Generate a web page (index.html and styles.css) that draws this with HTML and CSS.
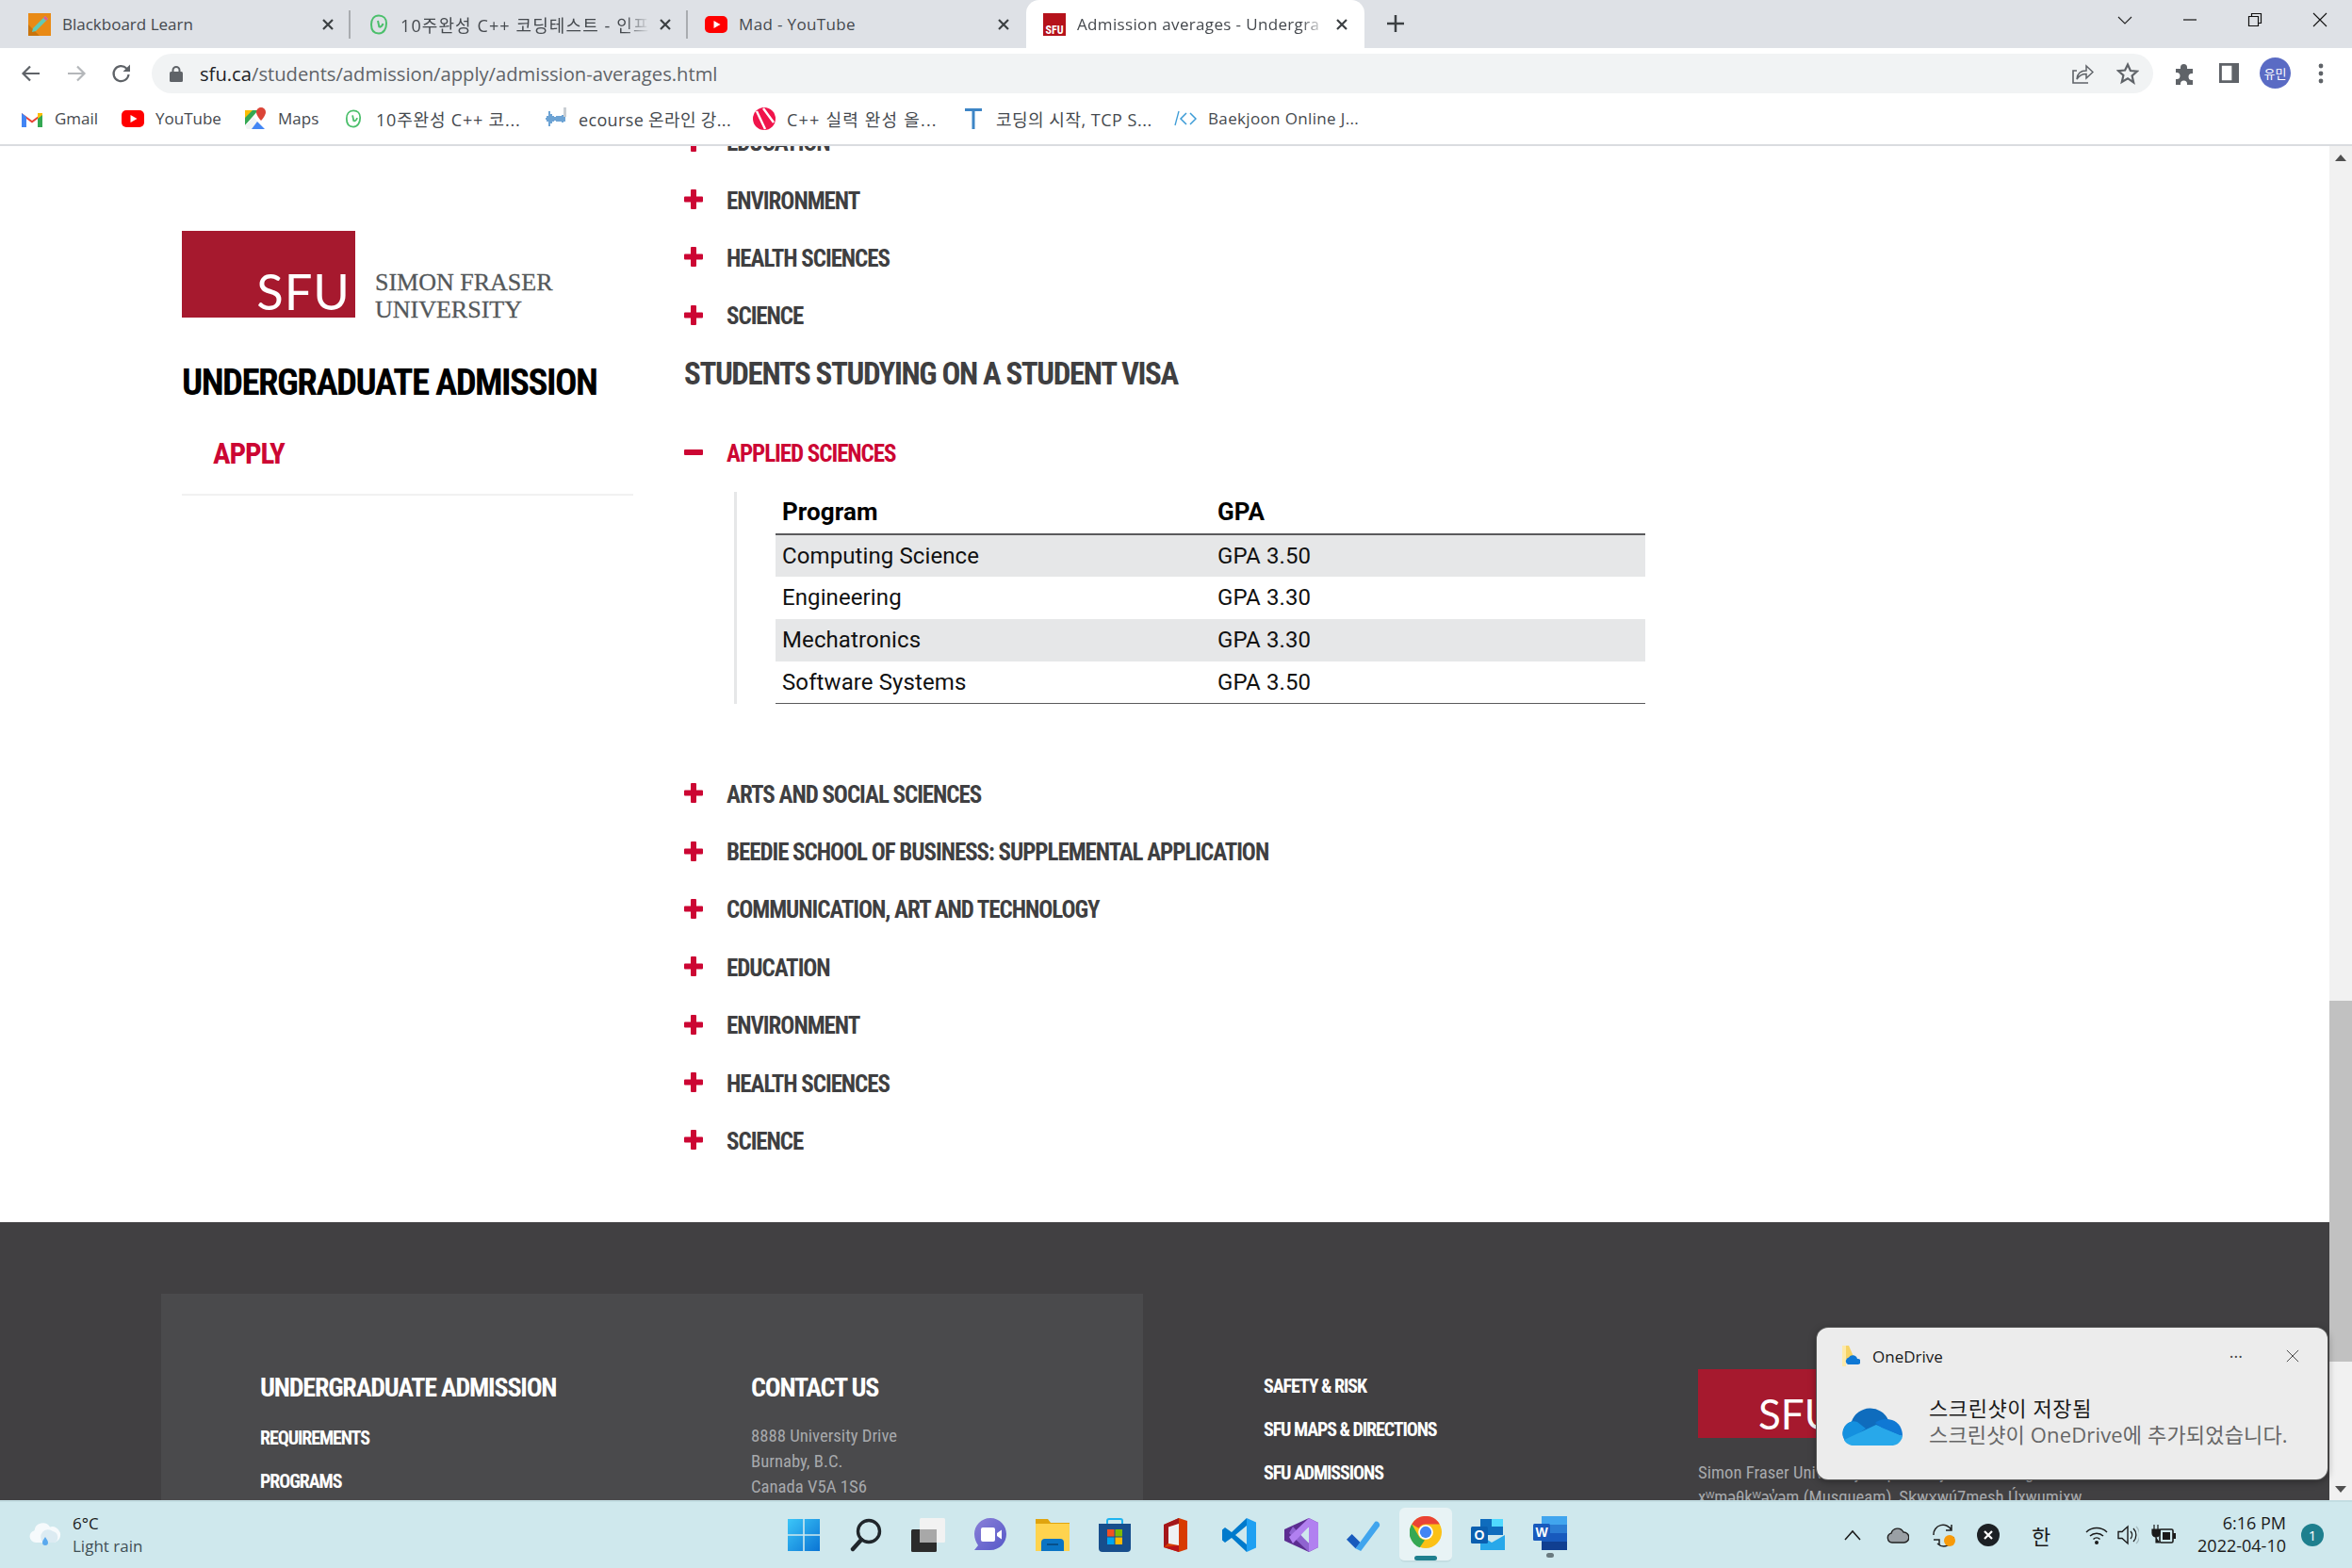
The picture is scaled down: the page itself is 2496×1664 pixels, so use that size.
FILE: index.html
```html
<!DOCTYPE html>
<html lang="en">
<head>
  <meta charset="UTF-8">
  <title>Admission averages - Undergraduate Admission</title>
  <link rel="stylesheet" href="styles.css">
</head>
<body>
  <svg class="defs" width="0" height="0">
    <symbol id="yt" viewBox="0 0 24 18"><rect width="24" height="18" rx="5" fill="#f00"/><path d="M9.5 5l7 4-7 4z" fill="#fff"/></symbol>
    <symbol id="inf" viewBox="0 0 20 22"><path d="M10 1.5c4.8 0 8 3.2 8 8.2 0 5.5-2.6 10.8-8 10.8-5 0-8-3.5-8-9.500 0-5.500 3-9.500 8-9.500z" fill="none" stroke="#4bbf6b" stroke-width="2"/><path d="M9 7l1.500 7M10.500 14c2-.5 3.500-2 4-4" fill="none" stroke="#4bbf6b" stroke-width="2"/></symbol>
    <symbol id="x" viewBox="0 0 14 14"><path d="M2 2l10 10M12 2L2 12" stroke="#3c4043" stroke-width="2.200" fill="none"/></symbol>
    <symbol id="plus" viewBox="0 0 20 21"><path d="M7 1a1 1 0 0 1 1-1h4a1 1 0 0 1 1 1v6.500h6a1 1 0 0 1 1 1v4a1 1 0 0 1-1 1h-6V20a1 1 0 0 1-1 1H8a1 1 0 0 1-1-1v-6.500H1a1 1 0 0 1-1-1v-4a1 1 0 0 1 1-1h6z" fill="#cc0633"/></symbol>
  </svg>

  <div class="tabstrip">
    <div class="tab">
      <svg class="favicon" viewBox="0 0 24 24"><rect width="24" height="24" fill="#e98a15"/><path d="M0 24V12l12 12z" fill="#c9740c"/><path d="M18 3l3 3L8 19l-4 1 1-4z" fill="#62c9b6"/><path d="M18 3l3 3-2 2-3-3z" fill="#e85c8a"/></svg>
      <span class="tab-title">Blackboard Learn</span>
      <svg class="tab-close"><use href="#x"/></svg>
    </div>
    <div class="tab tab-second">
      <svg class="favicon favicon-inf"><use href="#inf"/></svg>
      <span class="tab-title tab-fade ko">10주완성 C++ 코딩테스트 - 인프</span>
      <svg class="tab-close"><use href="#x"/></svg>
    </div>
    <div class="tab tab-last">
      <svg class="favicon favicon-yt"><use href="#yt"/></svg>
      <span class="tab-title">Mad - YouTube</span>
      <svg class="tab-close"><use href="#x"/></svg>
    </div>
    <div class="tab tab-active">
      <div class="favicon favicon-sfu"><span>SFU</span></div>
      <span class="tab-title tab-fade">Admission averages - Undergra</span>
      <svg class="tab-close"><use href="#x"/></svg>
    </div>
    <svg class="new-tab" viewBox="0 0 18 18"><path d="M9 0v18M0 9h18" stroke="#3c4043" stroke-width="2.500"/></svg>
    <div class="window-controls">
      <svg class="win-btn" viewBox="0 0 16 16"><path d="M1 5l7 7 7-7" fill="none" stroke="#222" stroke-width="1.100"/></svg>
      <svg class="win-btn" viewBox="0 0 16 16"><path d="M1 8h14" stroke="#111" stroke-width="1.200"/></svg>
      <svg class="win-btn" viewBox="0 0 16 16"><path d="M1.500 4.500h10v10h-10zM4.500 4V1.500h10v10H12" fill="none" stroke="#111" stroke-width="1.200"/></svg>
      <svg class="win-btn" viewBox="0 0 16 16"><path d="M1 1l14 14M15 1L1 15" stroke="#111" stroke-width="1.100"/></svg>
    </div>
  </div>

  <div class="toolbar">
    <svg class="nav-icon" viewBox="0 0 24 24"><path d="M21 12H4M11 4.500L3.500 12l7.500 7.500" fill="none" stroke="#5f6368" stroke-width="2.200"/></svg>
    <svg class="nav-icon" viewBox="0 0 24 24"><path d="M3 12h17M13 4.500l7.500 7.500-7.500 7.500" fill="none" stroke="#b4b7ba" stroke-width="2.200"/></svg>
    <svg class="nav-icon" viewBox="0 0 24 24"><path d="M19.500 13a8 8 0 1 1-2.300-6.500L20 9" fill="none" stroke="#5f6368" stroke-width="2.200"/><path d="M21 2.500V10h-7.500z" fill="#5f6368"/></svg>
    <div class="omnibox">
      <svg class="lock" viewBox="0 0 14 18"><path d="M3.500 8V5.500a3.500 3.500 0 0 1 7 0V8" fill="none" stroke="#5f6368" stroke-width="2"/><rect y="7" width="14" height="11" rx="1.500" fill="#5f6368"/></svg>
      <span class="url"><b>sfu.ca</b>/students/admission/apply/admission-averages.html</span>
      <svg class="omni-icon" viewBox="0 0 24 24"><path d="M18 22H2V9h4" fill="none" stroke="#5f6368" stroke-width="1.600"/><path d="M6 18c.5-6 4.500-9 10-9V4l7 6.500-7 6.500v-4.500c-4 0-7.500 1.500-10 5.500z" fill="none" stroke="#5f6368" stroke-width="1.500"/></svg>
      <svg class="omni-icon" viewBox="0 0 24 24"><path d="M12 2.500l2.900 6.500 7 .7-5.300 4.700 1.600 7L12 17.200l-6.200 3.700 1.600-7-5.300-4.700 7-.7z" fill="none" stroke="#5f6368" stroke-width="2.200"/></svg>
    </div>
    <svg class="tool-puzzle" viewBox="0 0 24 24"><path d="M3 7h5V5.500a3.500 3.500 0 0 1 7 0V7h6v5h-1a3.500 3.500 0 0 0 0 7h1v5h-6v-1a3.500 3.500 0 0 0-7 0v1H3v-6h1a3.500 3.500 0 0 0 0-7H3z" fill="#5f6368"/></svg>
    <svg class="tool-panel" viewBox="0 0 22 22"><path d="M0 0h22v22H0zM3 3v16h11V3z" fill="#5f6368" fill-rule="evenodd"/></svg>
    <div class="avatar"><span>유민</span></div>
    <svg class="tool-dots" viewBox="0 0 6 24"><circle cx="3" cy="4" r="2.400" fill="#5f6368"/><circle cx="3" cy="12" r="2.400" fill="#5f6368"/><circle cx="3" cy="20" r="2.400" fill="#5f6368"/></svg>
  </div>

  <div class="bookmarks">
    <div class="bm bm-gmail">
      <svg class="bm-icon" viewBox="0 0 24 18"><path d="M1 18V3l11 8 11-8v15h-5V9l-6 4.500L6 9v9z" fill="#ea4335"/><path d="M1 18V3l5 4v11z" fill="#4285f4"/><path d="M23 18V3l-5 4v11z" fill="#34a853"/><path d="M18 3v6l5-4V3z" fill="#fbbc04"/></svg>
      <span>Gmail</span>
    </div>
    <div class="bm bm-yt">
      <svg class="bm-icon"><use href="#yt"/></svg>
      <span>YouTube</span>
    </div>
    <div class="bm bm-maps">
      <svg class="bm-icon bm-icon-tall" viewBox="0 0 24 24"><path d="M1 3h14L1 19z" fill="#34a853"/><path d="M1 19L10 10l11 13H3z" fill="#f1f3f4"/><path d="M8 23l6-8 8 8z" fill="#4285f4"/><path d="M1 3h8L1 11z" fill="#fbbc04"/><path d="M18 0a5 5 0 0 1 5 5c0 4-5 9-5 9s-5-5-5-9a5 5 0 0 1 5-5z" fill="#db4437"/></svg>
      <span>Maps</span>
    </div>
    <div class="bm bm-inf">
      <svg class="bm-icon bm-icon-inf"><use href="#inf"/></svg>
      <span class="ko">10주완성 C++ 코...</span>
    </div>
    <div class="bm bm-ecourse">
      <svg class="bm-icon bm-icon-tall" viewBox="0 0 24 24"><path d="M1 12h1M3 9v6M5 4v16M7 7v10M9 9v6M11 10v4M13 9v6M15 9v6M17 9v6M19 8v8M21 9v6" stroke="#3d85c6" stroke-width="1.500"/><path d="M20 0h3v10h-3z" fill="#c9ced3"/></svg>
      <span class="ko">ecourse 온라인 강...</span>
    </div>
    <div class="bm bm-cpp">
      <svg class="bm-icon bm-icon-tall" viewBox="0 0 24 24"><circle cx="12" cy="12" r="12" fill="#f0144b"/><path d="M4 4l9 19M11 1l11 15" stroke="#fff" stroke-width="2.400"/></svg>
      <span class="ko">C++ 실력 완성 올...</span>
    </div>
    <div class="bm bm-t">
      <svg class="bm-icon bm-icon-tall" viewBox="0 0 20 24"><path d="M1 1h18v3h-7.500v19h-3V4H1z" fill="#3d85c6"/></svg>
      <span class="ko">코딩의 시작, TCP S...</span>
    </div>
    <div class="bm bm-boj">
      <svg class="bm-icon" viewBox="0 0 24 18"><path d="M5 1L1 16" stroke="#3c9bd6" stroke-width="1.300"/><path d="M13 3L7 9l6 6M17 3l6 6-6 6" fill="none" stroke="#3c9bd6" stroke-width="1.500"/></svg>
      <span>Baekjoon Online J...</span>
    </div>
  </div>

  <div class="viewport">
    <div class="page">
      <div class="columns">
        <aside class="sidebar">
          <div class="logo">
            <div class="logo-mark"><span>SFU</span></div>
            <div class="logo-name">SIMON FRASER<br>UNIVERSITY</div>
          </div>
          <h1 class="site-title">UNDERGRADUATE ADMISSION</h1>
          <div class="side-nav">APPLY</div>
        </aside>

        <main class="content">
          <div class="acc-row"><svg class="acc-icon"><use href="#plus"/></svg><span>EDUCATION</span></div>
          <div class="acc-row"><svg class="acc-icon"><use href="#plus"/></svg><span>ENVIRONMENT</span></div>
          <div class="acc-row"><svg class="acc-icon"><use href="#plus"/></svg><span>HEALTH SCIENCES</span></div>
          <div class="acc-row"><svg class="acc-icon"><use href="#plus"/></svg><span>SCIENCE</span></div>

          <h2 class="visa-title">STUDENTS STUDYING ON A STUDENT VISA</h2>

          <div class="acc-row acc-open"><div class="acc-minus"></div><span>APPLIED SCIENCES</span></div>
          <div class="acc-body">
            <table class="gpa-table">
              <thead>
                <tr><th>Program</th><th>GPA</th></tr>
              </thead>
              <tbody>
                <tr><td>Computing Science</td><td>GPA 3.50</td></tr>
                <tr><td>Engineering</td><td>GPA 3.30</td></tr>
                <tr><td>Mechatronics</td><td>GPA 3.30</td></tr>
                <tr><td>Software Systems</td><td>GPA 3.50</td></tr>
              </tbody>
            </table>
          </div>

          <div class="acc-row"><svg class="acc-icon"><use href="#plus"/></svg><span>ARTS AND SOCIAL SCIENCES</span></div>
          <div class="acc-row"><svg class="acc-icon"><use href="#plus"/></svg><span>BEEDIE SCHOOL OF BUSINESS: SUPPLEMENTAL APPLICATION</span></div>
          <div class="acc-row"><svg class="acc-icon"><use href="#plus"/></svg><span>COMMUNICATION, ART AND TECHNOLOGY</span></div>
          <div class="acc-row"><svg class="acc-icon"><use href="#plus"/></svg><span>EDUCATION</span></div>
          <div class="acc-row"><svg class="acc-icon"><use href="#plus"/></svg><span>ENVIRONMENT</span></div>
          <div class="acc-row"><svg class="acc-icon"><use href="#plus"/></svg><span>HEALTH SCIENCES</span></div>
          <div class="acc-row"><svg class="acc-icon"><use href="#plus"/></svg><span>SCIENCE</span></div>
        </main>
      </div>

      <footer class="footer">
        <div class="footer-panel">
          <div class="footer-col-a">
            <h3>UNDERGRADUATE ADMISSION</h3>
            <a>REQUIREMENTS</a>
            <a>PROGRAMS</a>
          </div>
          <div class="footer-col-b">
            <h3>CONTACT US</h3>
            <p>8888 University Drive</p>
            <p>Burnaby, B.C.</p>
            <p>Canada V5A 1S6</p>
          </div>
        </div>
        <div class="footer-links">
          <a>SAFETY &amp; RISK</a>
          <a>SFU MAPS &amp; DIRECTIONS</a>
          <a>SFU ADMISSIONS</a>
        </div>
        <div class="footer-brand">
          <div class="footer-mark"><span>SFU</span></div>
          <p>Simon Fraser University respectfully acknowledges the</p>
          <p>xʷməθkʷəy̓əm (Musqueam), Sḵwx̱wú7mesh Úxwumixw</p>
        </div>
      </footer>
    </div>

    <div class="scrollbar">
      <div class="sb-arrow"><div class="sb-up"></div></div>
      <div class="sb-track"><div class="sb-thumb"></div></div>
      <div class="sb-arrow"><div class="sb-down"></div></div>
    </div>

    <div class="toast">
      <div class="toast-head">
        <svg class="toast-app" viewBox="0 0 20 24"><path d="M1 1h7l6 14H1z" fill="#f6d365"/><path d="M1 1h4v22H1z" fill="#fde9a8"/><path d="M7 21a4 4 0 0 1 1-7.500 5 5 0 0 1 9 1.500 3 3 0 0 1 1 6z" fill="#0f78d4"/></svg>
        <span class="toast-name">OneDrive</span>
        <span class="toast-more">···</span>
        <svg class="toast-close" viewBox="0 0 16 16"><path d="M1 1l14 14M15 1L1 15" stroke="#444" stroke-width="1.100"/></svg>
      </div>
      <div class="toast-body">
        <svg class="toast-cloud" viewBox="0 0 66 46"><path d="M14 44A13 13 0 0 1 11 18.500 21 21 0 0 1 50 17a14 14 0 0 1 4 27z" fill="#0f6cbd"/><path d="M11 18.500A13 13 0 0 0 5 40l21-14-9-7a14 14 0 0 0-6-.5z" fill="#1490df"/><path d="M37 22l28 12c-1 6-6 10-11 10H14c-5 0-9-2-11-6z" fill="#28a8ea"/><path d="M36 20c5-4 11-5 18-3 7 2 11 9 11 17L43 25z" fill="#0f78d4"/></svg>
        <div class="toast-text">
          <div class="toast-title">스크린샷이 저장됨</div>
          <div class="toast-sub">스크린샷이 OneDrive에 추가되었습니다.</div>
        </div>
      </div>
    </div>
  </div>

  <div class="taskbar">
    <div class="weather">
      <svg class="weather-icon" viewBox="0 0 36 32"><path d="M8 24a6.500 6.500 0 0 1-1.500-12.800A9 9 0 0 1 23 7.500 8 8 0 0 1 28 24z" fill="#f6fafc"/><path d="M16 24a6 6 0 0 1 10-12 6.500 6.500 0 0 1 2 12z" fill="#dcebf2"/><path d="M18 18c1.500 2.500 3 4 3 6a3 3 0 0 1-6 0c0-2 1.500-3.500 3-6z" fill="#5aa9ee"/></svg>
      <div class="weather-text"><div>6°C</div><div>Light rain</div></div>
    </div>

    <div class="task-icons">
      <svg class="task-icon" viewBox="0 0 36 36"><defs><linearGradient id="w" x1="0" y1="0" x2="1" y2="1"><stop offset="0" stop-color="#3cc6f8"/><stop offset="1" stop-color="#0a74d4"/></linearGradient></defs><path d="M1 1h16.200v16.200H1zM18.800 1H35v16.200H18.800zM1 18.800h16.200V35H1zM18.800 18.800H35V35H18.800z" fill="url(#w)"/></svg>
      <svg class="task-icon" viewBox="0 0 36 36"><circle cx="21" cy="14" r="11.500" fill="none" stroke="#20262b" stroke-width="3.400"/><path d="M13 23L4 33" stroke="#20262b" stroke-width="4.400" stroke-linecap="round"/></svg>
      <svg class="task-icon" viewBox="0 0 36 36"><rect x="0" y="12" width="27" height="24" rx="1.500" fill="#2b2b2b"/><rect x="9" y="0" width="27" height="26" rx="1.500" fill="#f2f2f2"/><rect x="9" y="12" width="18" height="14" fill="#a8a8a8"/></svg>
      <svg class="task-icon" viewBox="0 0 36 36"><defs><linearGradient id="c" x1="0" y1="0" x2="1" y2="1"><stop offset="0" stop-color="#8b80d8"/><stop offset="1" stop-color="#5558c8"/></linearGradient></defs><path d="M18 0c10 0 17 8 17 17s-7 17-17 17H1l4-5C3 26 1 22 1 17 1 8 8 0 18 0z" fill="url(#c)"/><path d="M8 12a2 2 0 0 1 2-2h11a2 2 0 0 1 2 2v11a2 2 0 0 1-2 2H10a2 2 0 0 1-2-2zM25 16l5-3.500v10L25 19z" fill="#fff"/></svg>
      <svg class="task-icon" viewBox="0 0 36 36"><path d="M0 1h13l3 4h20v30H0z" fill="#e0a40e"/><path d="M0 6h36v29H0z" fill="#ffd34e"/><path d="M6 26a4 4 0 0 1 4-4h16a4 4 0 0 1 4 4v9H6z" fill="#0a74c4"/><path d="M12 28h12" stroke="#07508a" stroke-width="2"/></svg>
      <svg class="task-icon" viewBox="0 0 36 36"><path d="M10 8V3a2 2 0 0 1 2-2h12a2 2 0 0 1 2 2v5" fill="none" stroke="#1fb4f0" stroke-width="2"/><path d="M1 6h34v26a4 4 0 0 1-4 4H5a4 4 0 0 1-4-4z" fill="#174e8c"/><path d="M10 12h7.500v7.500H10z" fill="#f25022"/><path d="M18.500 12H26v7.500h-7.500z" fill="#7fba00"/><path d="M10 20.500h7.500V28H10z" fill="#00a4ef"/><path d="M18.500 20.500H26V28h-7.500z" fill="#ffb900"/></svg>
      <svg class="task-icon" viewBox="0 0 36 36"><path d="M4 7l16-7 9 3v30l-9 3-16-5z" fill="#d83b01"/><path d="M4 7l16-7v6L9 9.500v17l-5 4.500z" fill="#a4161a"/><path d="M4 31l16-2v7z" fill="#b8141a"/><path d="M9 9.500L20 6v23L9 27z" fill="#eef1f3"/></svg>
      <svg class="task-icon" viewBox="0 0 36 36"><path d="M26 0L10 15 3 10l-3 2.500v11L3 26l7-5 16 15z" fill="#007acc"/><path d="M26 8L14 18l12 10z" fill="#cfe8ed"/><path d="M26 0l10 4.500v27L26 36z" fill="#1fa0f2"/></svg>
      <svg class="task-icon" viewBox="0 0 36 36"><path d="M26 0l10 5v26l-10 5L0 24V12z" fill="#5c2d91"/><path d="M26 9L15 18l11 9z" fill="#cfe8ed"/><path d="M26 0l10 5v26l-10 5z" fill="#b180f0"/><path d="M9 9l17 18v9L5 16z" fill="#8f63d0"/><path d="M26 0v9L9 27l-4-7z" fill="#b180f0"/></svg>
      <svg class="task-icon" viewBox="0 0 38 36"><path d="M0 23l6-6 10 10-6 6z" fill="#185abd"/><path d="M10 33l22-30a4 4 0 0 1 5 5L16 36z" fill="#41a5ee"/></svg>
      <div class="task-chrome">
        <svg class="chrome-logo" viewBox="0 0 32 32"><circle cx="16" cy="16" r="16" fill="#fbc116"/><path d="M2.100 8A16 16 0 0 1 29.900 8H16a8 8 0 0 0-7 4z" fill="#ea4335"/><path d="M2.100 8L9 20l1 1.500a8 8 0 0 0 5 2.500l-5 7.300A16 16 0 0 1 2.100 8z" fill="#34a853"/><circle cx="16" cy="16" r="7.400" fill="#fff"/><circle cx="16" cy="16" r="5.800" fill="#4285f4"/></svg>
        <div class="chrome-bar"></div>
      </div>
      <svg class="task-icon" viewBox="0 0 36 36"><path d="M10 1h24v17H10z" fill="#0f6cbd"/><path d="M22 1h12v8H22z" fill="#50d9ff"/><path d="M10 18l12 8 14-8v16H10z" fill="#28a8ea"/><rect y="9" width="18" height="18" rx="1.500" fill="#0a5fb0"/><text class="app-letter" x="9" y="23">O</text></svg>
      <div class="task-word">
        <svg class="task-icon" viewBox="0 0 36 36"><path d="M9 0h27v9H9z" fill="#41a5ee"/><path d="M9 9h27v9H9z" fill="#2b7cd3"/><path d="M9 18h27v9H9z" fill="#185abd"/><path d="M9 27h27v9H9z" fill="#103f91"/><rect y="8" width="18" height="18" rx="1.500" fill="#185abd"/><text class="app-letter" x="9" y="22">W</text></svg>
        <div class="word-dot"></div>
      </div>
    </div>

    <div class="tray">
      <svg class="tray-chevron" viewBox="0 0 18 12"><path d="M1 11l8-9 8 9" fill="none" stroke="#1a1a1a" stroke-width="1.500"/></svg>
      <svg class="tray-cloud" viewBox="0 0 24 18"><path d="M6 17a5 5 0 0 1-1-9.800A7 7 0 0 1 18 6a5.500 5.500 0 0 1 .5 11z" fill="#9aa0a5" stroke="#222" stroke-width="1.400"/></svg>
      <svg class="tray-sync" viewBox="0 0 26 26"><path d="M2 13A10 10 0 0 1 21 8M21 2v6h-6M23 15A10 10 0 0 1 6 22M2 18h6v6" fill="none" stroke="#222" stroke-width="1.500"/><circle cx="19" cy="19" r="6" fill="#f79a09"/></svg>
      <svg class="tray-x" viewBox="0 0 24 24"><circle cx="12" cy="12" r="12" fill="#1c2024"/><path d="M8 8l8 8M16 8l-8 8" stroke="#fff" stroke-width="2.200"/></svg>
      <span class="tray-ime">한</span>
      <svg class="tray-wifi" viewBox="0 0 24 20"><path d="M1 7a16 16 0 0 1 22 0M5 11a10 10 0 0 1 14 0M8.500 14.500a5 5 0 0 1 7 0" fill="none" stroke="#1a1a1a" stroke-width="1.500"/><circle cx="12" cy="18" r="2" fill="#1a1a1a"/></svg>
      <svg class="tray-vol" viewBox="0 0 24 22"><path d="M2 7.500h4L12 2v18l-6-5.500H2z" fill="none" stroke="#1a1a1a" stroke-width="1.400"/><path d="M15 7a6 6 0 0 1 0 8M18 4a10 10 0 0 1 0 14" fill="none" stroke="#1a1a1a" stroke-width="1.300"/><path d="M21 2a13 13 0 0 1 0 18" fill="none" stroke="#a7bcc1" stroke-width="1.300"/></svg>
      <svg class="tray-batt" viewBox="0 0 26 22"><path d="M3 0v5M7 0v5M1 5h8v4a4 4 0 0 1-8 0zM5 13v6h4" fill="#1a1a1a" stroke="#1a1a1a" stroke-width="1.200"/><rect x="9" y="5" width="14" height="14" rx="1.500" fill="none" stroke="#1a1a1a" stroke-width="1.600"/><rect x="12" y="8" width="8" height="8" fill="#1a1a1a"/><rect x="23" y="9" width="3" height="6" fill="#1a1a1a"/></svg>
      <div class="clock"><div>6:16 PM</div><div>2022-04-10</div></div>
      <div class="badge">1</div>
    </div>
  </div>
</body>
</html>
```
FILE: styles.css
```css
* {
  box-sizing: border-box;
}
html, body {
  margin: 0;
  height: 100%;
}
body {
  width: 2496px;
  height: 1664px;
  overflow: hidden;
  display: flex;
  flex-direction: column;
  font-family: "Open Sans", "Noto Sans CJK KR", sans-serif;
  background: #fff;
}
.defs {
  position: absolute;
}
.ko {
  font-size: 18px;
  letter-spacing: 0.800px;
}

/* browser tabs */
.tabstrip {
  height: 51px;
  flex: none;
  display: flex;
  align-items: stretch;
  background: #dee1e6;
}
.tab {
  width: 358px;
  padding: 0 17px 0 30px;
  display: flex;
  align-items: center;
  font-size: 17px;
  color: #45494e;
  position: relative;
}
.tab:not(.tab-active):not(.tab-last)::after {
  content: "";
  position: absolute;
  right: 0;
  top: 11px;
  bottom: 10px;
  width: 2px;
  background: #a9acb0;
}
.tab:first-child {
  width: 372px;
}
.tab-second {
  padding-left: 20px;
}
.tab-second .ko {
  letter-spacing: 1.100px;
}
.tab-last {
  padding-left: 18px;
  width: 359px;
  letter-spacing: 0.350px;
}
.tab-active {
  width: 359px;
  padding-left: 18px;
  background: #fff;
  border-radius: 14px 14px 0 0;
  letter-spacing: 0.350px;
}
.favicon {
  width: 24px;
  height: 24px;
  flex: none;
  margin-right: 12px;
}
.favicon-inf {
  width: 20px;
  height: 22px;
  margin-right: 13px;
}
.favicon-yt {
  height: 18px;
  margin-right: 12px;
}
.favicon-sfu {
  background: #b5121b;
  color: #fff;
  font: bold 12px/11px "Roboto Condensed", sans-serif;
  letter-spacing: 0;
  display: flex;
  align-items: flex-end;
  justify-content: center;
  overflow: hidden;
}
.tab-title {
  flex: 1;
  white-space: nowrap;
  overflow: hidden;
}
.tab-fade {
  -webkit-mask-image: linear-gradient(to right, #000 90%, transparent 100%);
  mask-image: linear-gradient(to right, #000 90%, transparent 100%);
}
.tab-close {
  width: 14px;
  height: 14px;
  flex: none;
  margin-left: 10px;
}
.new-tab {
  width: 18px;
  height: 18px;
  margin: 16px 0 0 24px;
}
.window-controls {
  margin-left: auto;
  display: flex;
  gap: 53px;
  align-items: flex-start;
  padding: 13px 26px 0 0;
}
.win-btn {
  width: 16px;
  height: 16px;
}

/* address bar */
.toolbar {
  height: 51px;
  flex: none;
  display: flex;
  align-items: center;
  padding: 2px 0 0 21px;
  background: #fff;
}
.nav-icon {
  width: 24px;
  height: 24px;
  margin-right: 24px;
}
.nav-icon:nth-child(3) {
  margin-right: 20px;
}
.omnibox {
  width: 2124px;
  height: 42px;
  border-radius: 21px;
  background: #f1f3f4;
  display: flex;
  align-items: center;
  padding-left: 19px;
  font-size: 20.200px;
  color: #5f6368;
}
.omnibox b {
  font-weight: 400;
  color: #202124;
}
.lock {
  width: 14px;
  height: 18px;
  margin-right: 18px;
}
.url {
  flex: 1;
}
.omni-icon {
  width: 24px;
  height: 24px;
  margin-right: 24px;
}
.omni-icon:last-child {
  margin-right: 15px;
}
.tool-puzzle {
  width: 24px;
  height: 24px;
  margin-left: 21px;
}
.tool-panel {
  width: 21px;
  height: 21px;
  margin-left: 25px;
}
.avatar {
  width: 33px;
  height: 33px;
  margin-left: 22px;
  border-radius: 50%;
  background: #5a6bc4;
  color: #fff;
  font-size: 13px;
  display: flex;
  align-items: center;
  justify-content: center;
}
.tool-dots {
  width: 6px;
  height: 24px;
  margin-left: 29px;
}

/* bookmarks bar */
.bookmarks {
  height: 53px;
  flex: none;
  display: flex;
  align-items: center;
  padding: 0 0 4px 22px;
  border-bottom: 2px solid #dadce0;
  font-size: 17px;
  color: #45494e;
  background: #fff;
}
.bm {
  display: flex;
  align-items: center;
  white-space: nowrap;
}
.bm-icon {
  width: 24px;
  height: 18px;
  flex: none;
  margin-right: 12px;
}
.bm-icon-tall {
  height: 24px;
}
.bm-icon-inf {
  width: 18px;
  height: 20px;
  margin-right: 15px;
}
.bm-gmail { width: 107px; }
.bm-yt { width: 130px; }
.bm-maps { width: 107px; }
.bm-inf { width: 212px; }
.bm-ecourse { width: 221px; }
.bm-cpp { width: 222px; }
.bm-t { width: 225px; }
.bm-ecourse .ko { letter-spacing: 0.350px; }
.bm-cpp .ko { letter-spacing: 1.200px; }
.bm-t .ko { letter-spacing: 0.500px; }
.bm-boj { letter-spacing: 0.350px; }

/* page area */
.viewport {
  flex: 1;
  min-height: 0;
  display: flex;
  position: relative;
  overflow: hidden;
}
.page {
  flex: 1;
  min-width: 0;
  overflow: hidden;
}
.columns {
  display: flex;
  margin-top: -34px;
}
.sidebar {
  width: 726px;
  padding: 124px 54px 0 193px;
  flex: none;
}
.logo {
  display: flex;
  align-items: flex-end;
  gap: 21px;
}
.logo-mark {
  width: 184px;
  height: 92px;
  background: #a6192e;
  color: #fff;
  font: 400 52.500px/0.900 Lato, sans-serif;
  letter-spacing: 1px;
  display: flex;
  justify-content: flex-end;
  align-items: flex-end;
  padding: 0 5px 5px 0;
}
.logo-name {
  font: 400 26px/29px "Liberation Serif", serif;
  -webkit-text-stroke: 0.300px #54585a;
  color: #54585a;
  margin-bottom: -6px;
}
.site-title {
  margin: 45px 0 0;
  font: bold 39px/48px "Roboto Condensed", sans-serif;
  letter-spacing: -0.040em;
  color: #000;
  white-space: nowrap;
}
.side-nav {
  margin-top: 32px;
  padding: 0 0 22px 33px;
  border-bottom: 2px solid #f1f1f1;
  font: bold 31px/40px "Roboto Condensed", sans-serif;
  letter-spacing: -0.036em;
  color: #cc0633;
}
.content {
  flex: 1;
}
.acc-row {
  height: 61.400px;
  display: flex;
  align-items: center;
  gap: 25px;
  font: bold 25px/1 "Roboto Condensed", sans-serif;
  letter-spacing: -1.050px;
  color: #3f3f41;
  white-space: nowrap;
}
.acc-icon {
  width: 20px;
  height: 21px;
  flex: none;
  margin-top: -3px;
}
.acc-minus {
  width: 20px;
  height: 6px;
  flex: none;
  margin-top: -3px;
  border-radius: 1px;
  background: #cc0633;
}
.visa-title {
  margin: 0;
  font: bold 33px/1.200 "Roboto Condensed", sans-serif;
  letter-spacing: -1.400px;
  color: #3f3f41;
  height: 61px;
  display: flex;
  align-items: center;
}
.acc-open {
  margin-top: 23px;
  color: #cc0633;
}
.acc-body {
  margin: 10px 0 65px 53px;
  padding-left: 41px;
  width: 967px;
  border-left: 3px solid #e6e7e8;
}
.gpa-table {
  width: 923px;
  border-collapse: collapse;
  font: 400 24px/1.200 Roboto, sans-serif;
  letter-spacing: 0.100px;
  color: #111;
}
.gpa-table th {
  text-align: left;
  font-weight: 700;
  font-size: 26px;
  height: 45px;
  padding: 0 0 0 7px;
  color: #000;
  border-bottom: 2px solid #5a5a5c;
}
.gpa-table td {
  height: 45px;
  padding: 0 0 0 7px;
}
.gpa-table th:first-child,
.gpa-table td:first-child {
  width: 462px;
}
.gpa-table tbody tr:nth-child(odd) {
  background: #e6e7e8;
}
.gpa-table tbody tr:last-child td {
  border-bottom: 1px solid #5a5a5c;
}

/* footer */
.footer {
  margin-top: 55px;
  height: 400px;
  display: flex;
  align-items: flex-start;
  background: #414042;
  color: #fff;
}
.footer-panel {
  margin: 76px 0 0 171px;
  width: 1042px;
  height: 324px;
  padding: 82px 0 0 105px;
  display: flex;
  background: #4a4a4c;
}
.footer-col-a {
  width: 521px;
}
.footer h3 {
  margin: 0 0 20px;
  font: bold 28px/36px "Roboto Condensed", sans-serif;
  letter-spacing: -1.200px;
  white-space: nowrap;
}
.footer a {
  display: block;
  height: 46px;
  font: bold 20px/30px "Roboto Condensed", sans-serif;
  letter-spacing: -1.100px;
  color: #fff;
  white-space: nowrap;
}
.footer-col-b p,
.footer-brand p {
  margin: 0;
  font: 400 18.700px/27px "Roboto Condensed", sans-serif;
  color: #a7a9ac;
  white-space: nowrap;
}
.footer-links {
  margin: 159px 0 0 128px;
  width: 461px;
}
.footer-brand {
  margin-top: 156px;
}
.footer-mark {
  width: 184px;
  height: 73px;
  margin-bottom: 24px;
  background: #a6192e;
  color: #fff;
  font: 400 44px/1 Lato, sans-serif;
  display: flex;
  align-items: flex-end;
  padding: 0 0 4px 64px;
}
.footer-brand p {
  line-height: 26px;
}

/* fake scrollbar */
.scrollbar {
  width: 24px;
  flex: none;
  display: flex;
  flex-direction: column;
  background: #f1f1f1;
}
.sb-arrow {
  height: 24px;
  flex: none;
  display: flex;
  align-items: center;
  justify-content: center;
}
.sb-up,
.sb-down {
  width: 0;
  height: 0;
  border-left: 6px solid transparent;
  border-right: 6px solid transparent;
}
.sb-up {
  border-bottom: 7px solid #505050;
}
.sb-down {
  border-top: 7px solid #505050;
}
.sb-track {
  flex: 1;
  padding-top: 883px;
}
.sb-thumb {
  height: 383px;
  background: #c1c1c1;
}

/* onedrive notification */
.toast {
  position: absolute;
  left: 1928px;
  top: 1254px;
  width: 542px;
  height: 161px;
  padding: 17px 30px 0 26px;
  border-radius: 12px;
  background: #ececec;
  box-shadow: 0 0 0 1px #555, 0 2px 8px rgba(0, 0, 0, 0.4);
}
.toast-head {
  display: flex;
  align-items: center;
  height: 26px;
}
.toast-app {
  width: 20px;
  height: 24px;
  margin-right: 13px;
}
.toast-name {
  font-size: 17px;
  color: #1a1a1a;
  flex: 1;
}
.toast-more {
  font-size: 18px;
  color: #444;
  margin-right: 46px;
}
.toast-close {
  width: 14px;
  height: 14px;
}
.toast-body {
  display: flex;
  margin-top: 28px;
  gap: 27px;
}
.toast-cloud {
  width: 66px;
  height: 46px;
  margin-top: 10px;
  flex: none;
}
.toast-title {
  font-size: 22px;
  line-height: 28px;
  letter-spacing: 0.600px;
  color: #1a1a1a;
}
.toast-sub {
  font-size: 22px;
  line-height: 28px;
  letter-spacing: 0.150px;
  color: #666;
  white-space: nowrap;
}

/* windows taskbar */
.taskbar {
  height: 72px;
  flex: none;
  display: flex;
  align-items: center;
  position: relative;
  background: #cfe8ed;
  border-top: 2px solid #c3dde2;
  color: #1a1a1a;
  font-size: 17px;
}
.weather {
  width: 835px;
  flex: none;
  display: flex;
  align-items: center;
  padding-left: 30px;
  gap: 11px;
}
.weather-icon {
  width: 36px;
  height: 32px;
}
.weather-text {
  line-height: 24px;
}
.weather-text div:last-child {
  color: #3f4f55;
}
.task-icons {
  display: flex;
  align-items: center;
  gap: 30px;
  flex: none;
}
.task-icon {
  width: 36px;
  height: 36px;
  flex: none;
}
.app-letter {
  font: bold 14px "Liberation Sans", sans-serif;
  fill: #fff;
  text-anchor: middle;
}
.task-chrome {
  width: 56px;
  height: 58px;
  margin: 0 -10px;
  position: relative;
  display: flex;
  align-items: center;
  justify-content: center;
  border-radius: 6px;
  background: #e8f3f5;
  border-bottom: 2px solid #c4dde2;
}
.chrome-logo {
  width: 34px;
  height: 34px;
  margin-top: -4px;
}
.chrome-bar {
  position: absolute;
  bottom: 0;
  left: 16px;
  width: 24px;
  height: 5px;
  border-radius: 3px;
  background: #1f7f8e;
}
.task-word {
  position: relative;
}
.word-dot {
  position: absolute;
  left: 14px;
  top: 39px;
  width: 8px;
  height: 5px;
  border-radius: 3px;
  background: #6a7a7f;
}
.tray {
  margin-left: auto;
  display: flex;
  align-items: center;
  padding-right: 30px;
}
.tray-chevron {
  width: 18px;
  height: 12px;
  margin-right: 1px;
}
.tray-cloud {
  width: 24px;
  height: 18px;
  margin-left: 26px;
}
.tray-sync {
  width: 26px;
  height: 26px;
  margin-left: 24px;
}
.tray-x {
  width: 24px;
  height: 24px;
  margin-left: 22px;
}
.tray-ime {
  font-size: 22px;
  width: 24px;
  margin-left: 34px;
}
.tray-wifi {
  width: 24px;
  height: 20px;
  margin-left: 33px;
}
.tray-vol {
  width: 24px;
  height: 22px;
  margin-left: 9px;
}
.tray-batt {
  width: 26px;
  height: 22px;
  margin-left: 13px;
}
.clock {
  width: 116px;
  text-align: right;
  font-size: 18px;
  line-height: 24px;
  margin: -2px 0 0 1px;
}
.badge {
  width: 24px;
  height: 24px;
  margin-left: 16px;
  border-radius: 50%;
  background: #1e7f8e;
  color: #fff;
  font-size: 15px;
  display: flex;
  align-items: center;
  justify-content: center;
}
```
